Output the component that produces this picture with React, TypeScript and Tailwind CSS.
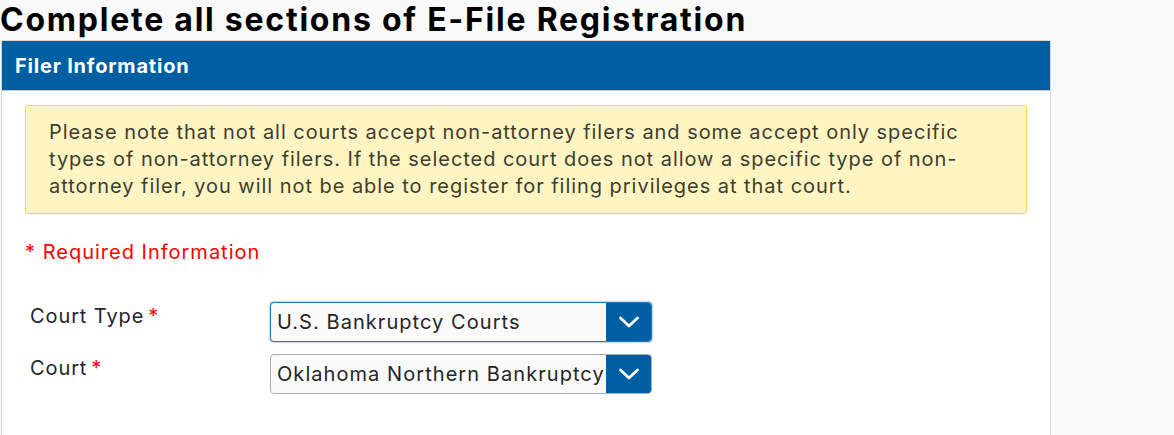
import React from "react";

function Chevron() {
  return (
    <svg width="24" height="14" viewBox="0 0 24 14" fill="none">
      <path d="M3.5 3 L12 11 L20.5 3" stroke="white" strokeWidth="2.8" strokeLinecap="round" strokeLinejoin="round" />
    </svg>
  );
}

function SelectBox({ value, focused }: { value: string; focused?: boolean }) {
  return (
    <div
      className={
        "relative flex h-[40px] w-[382px] overflow-hidden rounded-[4px] border bg-[#fafafa] " +
        (focused ? "border-[#2378c3] shadow-[0_0_2px_#2378c3]" : "border-[#a9aeb1]")
      }
    >
      <div className="flex-1 overflow-hidden whitespace-nowrap pl-[6px] pt-[6px] text-[20px] leading-[26px] tracking-[0.053em] text-[#262626]">
        {value}
      </div>
      <div className="absolute right-0 top-0 flex h-full w-[45px] items-center justify-center bg-[#005ea2]">
        <Chevron />
      </div>
    </div>
  );
}

export default function App() {
  return (
    <div
      className="h-[435px] w-[1174px] overflow-hidden bg-[#f9f9f9]"
      style={{ fontFamily: "Inter, 'Noto Sans', sans-serif" }}
    >
      <h1 className="text-[32px] font-bold leading-[40px] tracking-[0.055em] text-black">
        Complete all sections of E-File Registration
      </h1>
      <div className="ml-[1px] w-[1050px] rounded-t-[3px] border border-[#d6d7d9] bg-white pb-[60px]">
        <div className="flex h-[50px] items-center border-b border-[#c9cbcd] bg-[#005ea2] pl-[13px] text-[20px] font-bold tracking-[0.04em] text-white">
          Filer Information
        </div>
        <div className="px-[23px] pt-[14px]">
          <div className="rounded-[3px] border border-[#fcd34d] bg-[#fff5c2] py-[13px] pl-[23px] pr-[40px] text-[20px] leading-[27px] tracking-[0.048em] text-[#3d3d31]">
            Please note that not all courts accept non-attorney filers and some accept only specific types of
            non-attorney filers. If the selected court does not allow a specific type of non-attorney filer, you
            will not be able to register for filing privileges at that court.
          </div>
          <div className="mt-[24px] text-[20px] leading-[28px] tracking-[0.05em] text-[#ff0000]">* Required Information</div>
          <div className="mt-[36px] flex flex-col gap-[12px]">
            <div className="flex">
              <div className="w-[245px] pl-[5px] pt-[1px] text-[20px] leading-[26px] tracking-[0.045em] text-[#262626]">
                Court Type<span className="ml-[4px] text-[#ff0000]">*</span>
              </div>
              <SelectBox value="U.S. Bankruptcy Courts" focused />
            </div>
            <div className="flex">
              <div className="w-[245px] pl-[5px] pt-[1px] text-[20px] leading-[26px] tracking-[0.045em] text-[#262626]">
                Court<span className="ml-[4px] text-[#ff0000]">*</span>
              </div>
              <SelectBox value="Oklahoma Northern Bankruptcy Court" />
            </div>
          </div>
        </div>
      </div>
    </div>
  );
}
